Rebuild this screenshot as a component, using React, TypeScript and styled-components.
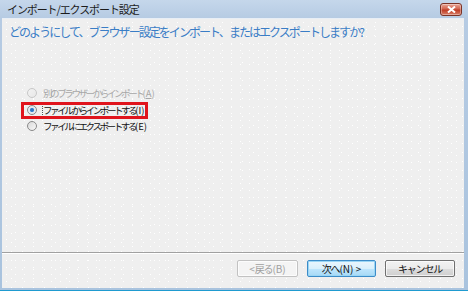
import React from "react";
import styled, { createGlobalStyle } from "styled-components";

const GlobalStyle = createGlobalStyle`
  html, body {
    margin: 0;
    padding: 0;
    background: #ffffff;
  }
  body {
    font-family: "Noto Sans CJK JP", "Noto Sans", sans-serif;
  }
`;

const Window = styled.div`
  width: 468px;
  height: 291px;
  box-sizing: border-box;
  display: flex;
  flex-direction: column;
  background: linear-gradient(180deg, #c5d7eb 0px, #b6cbe3 18px, #a9c3de 100%);
  padding: 0 4px 2px 2px;
  border-bottom: 1px solid #1f9bd0;
`;

const TitleBar = styled.div`
  height: 18px;
  display: flex;
  align-items: center;
  justify-content: space-between;
  padding-left: 5px;
  padding-right: 2px;
`;

const TitleText = styled.span`
  font-size: 11px;
  letter-spacing: -1.1px;
  color: #1b1b1b;
  line-height: 18px;
`;

const CloseButton = styled.div`
  width: 20px;
  height: 11px;
  margin-top: 1px;
  border: 1px solid #7b3326;
  border-radius: 3px;
  background: linear-gradient(180deg, #e9a99a 0%, #d2624c 45%, #bf3b24 55%, #d8806a 100%);
  display: flex;
  align-items: center;
  justify-content: center;
  box-shadow: inset 0 0 0 1px rgba(255, 255, 255, 0.35);
`;

const Client = styled.div`
  flex: 1;
  display: flex;
  flex-direction: column;
  background-color: #efefef;
  background-image: radial-gradient(circle, #ffffff 0.6px, transparent 0.9px),
    radial-gradient(circle, #ffffff 0.6px, transparent 0.9px);
  background-size: 9px 7px, 11px 9px;
  background-position: 0 0, 4px 3px;
  border-top: 1px solid #e8eef6;
`;

const Body = styled.div`
  flex: 1;
  padding: 5px 0 0 7px;
`;

const Heading = styled.div`
  font-size: 12px;
  letter-spacing: -1.95px;
  line-height: 16px;
  color: #3a7dc6;
`;

const RadioList = styled.div`
  margin-top: 45px;
  padding-left: 18px;
  display: flex;
  flex-direction: column;
  align-items: flex-start;
`;

const RadioRow = styled.div<{ $highlight?: boolean }>`
  position: relative;
  height: 16.5px;
  display: flex;
  align-items: center;
  gap: 6px;

  ${(p) =>
    p.$highlight &&
    `
    &::after {
      content: "";
      position: absolute;
      left: -6px;
      right: -3px;
      top: 0;
      height: 17px;
      box-sizing: border-box;
      border: 3px solid #e0141c;
    }
  `}
`;

const RadioCircle = styled.span<{ $checked?: boolean; $disabled?: boolean }>`
  width: 10px;
  height: 10px;
  box-sizing: border-box;
  border-radius: 50%;
  border: 1px solid ${(p) => (p.$disabled ? "#c8c8c8" : "#8a8a8a")};
  background: ${(p) =>
    p.$checked
      ? "radial-gradient(circle, #2a6fb8 0, #3c8ad6 1.8px, #dfe8f1 2.4px, #f4f4f4 100%)"
      : p.$disabled
      ? "linear-gradient(135deg, #f2f2f2, #e8e8e8)"
      : "linear-gradient(135deg, #d9d9d9, #f7f7f7)"};
  flex-shrink: 0;
`;

const RadioLabel = styled.span<{ $disabled?: boolean; $focused?: boolean }>`
  font-size: 9.5px;
  letter-spacing: -2.4px;
  line-height: 12px;
  white-space: nowrap;
  color: ${(p) => (p.$disabled ? "#a7a7a7" : "#111111")};
  ${(p) => p.$focused && "outline: 1px dotted #555; outline-offset: 0;"}
`;

const Key = styled.span`
  letter-spacing: 0;
`;

const Separator = styled.div`
  height: 1px;
  background: #a0a0a0;
  border-bottom: 1px solid #ffffff;
`;

const Footer = styled.div`
  height: 34px;
  display: flex;
  justify-content: flex-end;
  align-items: flex-start;
  gap: 9px;
  padding: 6px 9px 0 0;
  box-sizing: border-box;
`;

const Button = styled.div<{ $w: number; $disabled?: boolean; $default?: boolean }>`
  width: ${(p) => p.$w}px;
  height: 17px;
  box-sizing: border-box;
  border-radius: 2px;
  display: flex;
  align-items: center;
  justify-content: center;
  font-size: 10px;
  letter-spacing: -1.2px;
  white-space: nowrap;
  color: ${(p) => (p.$disabled ? "#a0a0a0" : "#111111")};
  border: 1px solid
    ${(p) => (p.$disabled ? "#c2c2c2" : p.$default ? "#3c8cc8" : "#707070")};
  background: ${(p) =>
    p.$disabled
      ? "#f4f4f4"
      : p.$default
      ? "linear-gradient(180deg, #eaf6fd 0%, #d9f0fc 50%, #bee6fd 51%, #a7d9f5 100%)"
      : "linear-gradient(180deg, #f2f2f2 0%, #ebebeb 50%, #dddddd 51%, #cfcfcf 100%)"};
  box-shadow: ${(p) =>
    p.$default ? "inset 0 0 0 1px #9ad6f5" : "inset 0 0 0 1px rgba(255,255,255,0.7)"};
`;

export default function App() {
  return (
    <>
      <GlobalStyle />
      <Window>
        <TitleBar>
          <TitleText>インポート/エクスポート設定</TitleText>
          <CloseButton>
            <svg width="9" height="7" viewBox="0 0 9 7">
              <path d="M1 0.5 L8 6.5 M8 0.5 L1 6.5" stroke="#ffffff" strokeWidth="2" />
            </svg>
          </CloseButton>
        </TitleBar>
        <Client>
          <Body>
            <Heading>どのようにして、ブラウザー設定をインポート、またはエクスポートしますか?</Heading>
            <RadioList>
              <RadioRow>
                <RadioCircle $disabled />
                <RadioLabel $disabled>
                  別のブラウザーからインポート
                  <Key>
                    (<u>A</u>)
                  </Key>
                </RadioLabel>
              </RadioRow>
              <RadioRow $highlight>
                <RadioCircle $checked />
                <RadioLabel $focused>
                  ファイルからインポートする<Key>(I)</Key>
                </RadioLabel>
              </RadioRow>
              <RadioRow>
                <RadioCircle />
                <RadioLabel>
                  ファイルにエクスポートする<Key>(E)</Key>
                </RadioLabel>
              </RadioRow>
            </RadioList>
          </Body>
          <Separator />
          <Footer>
            <Button $w={61} $disabled>
              <Key>&lt; </Key>戻る<Key>(B)</Key>
            </Button>
            <Button $w={69} $default>
              次へ<Key>(N) &gt;</Key>
            </Button>
            <Button $w={70}>キャンセル</Button>
          </Footer>
        </Client>
      </Window>
    </>
  );
}
